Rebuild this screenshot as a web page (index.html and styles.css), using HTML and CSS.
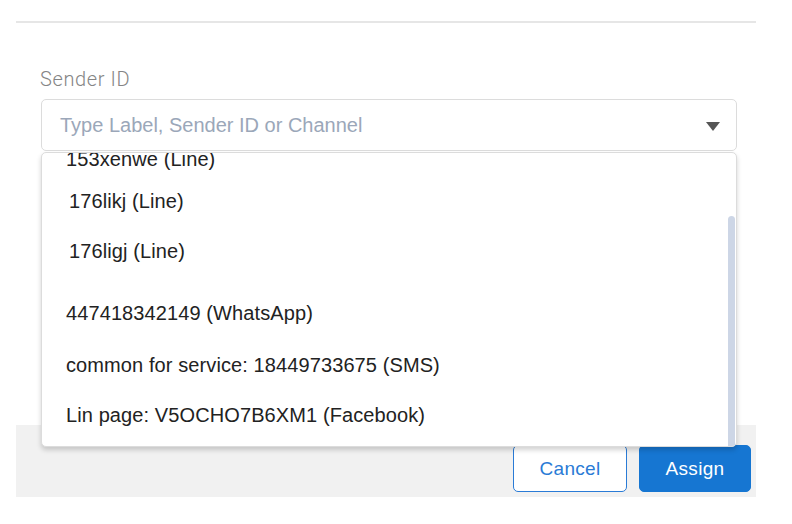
FILE: index.html
```html
<!DOCTYPE html>
<html>
<head>
<meta charset="utf-8">
<link rel="stylesheet" href="styles.css">
</head>
<body>
<div class="modal">
  <div class="topline"></div>
  <div class="content">
    <label class="label">Sender ID</label>
    <div class="field">
      <div class="input">
        <span class="placeholder">Type Label, Sender ID or Channel</span>
        <span class="caret"></span>
      </div>
      <div class="menu">
        <div class="menu-list">
          <div class="opt opt-line opt-first">153xenwe (Line)</div>
          <div class="opt opt-line opt-second">176likj (Line)</div>
          <div class="opt opt-line">176ligj (Line)</div>
          <div class="opt opt-group">447418342149 (WhatsApp)</div>
          <div class="opt opt-next">common for service: 18449733675 (SMS)</div>
          <div class="opt">Lin page: V5OCHO7B6XM1 (Facebook)</div>
        </div>
        <div class="scrollbar"></div>
      </div>
    </div>
  </div>
  <div class="footer">
    <button class="btn btn-cancel">Cancel</button>
    <button class="btn btn-assign">Assign</button>
  </div>
</div>
</body>
</html>
```
FILE: styles.css
```css
* { box-sizing: border-box; }
html, body { margin: 0; padding: 0; background: #fff; }
body {
  font-family: "Liberation Sans", Arial, sans-serif;
  color: #222;
}
.modal {
  margin-left: 16px;
  width: 740px;
}
.topline {
  margin-top: 21px;
  height: 2px;
  background: #e6e6e6;
}
.content {
  padding: 44px 19px 0 24px;
  height: 402px;
}
.label {
  display: block;
  font-family: Roboto, "Liberation Sans", sans-serif;
  font-weight: 300;
  font-size: 20px;
  letter-spacing: 0.6px;
  line-height: 24px;
  color: #858585;
}
.field {
  position: relative;
  margin-top: 8px;
  margin-left: 1px;
}
.input {
  height: 52px;
  border: 1px solid #dcdcdc;
  border-radius: 5px;
  display: flex;
  align-items: center;
  justify-content: space-between;
  padding: 0 16px 0 18px;
}
.placeholder {
  font-size: 20px;
  color: #9ba7b9;
}
.caret {
  width: 0;
  height: 0;
  border-left: 7px solid transparent;
  border-right: 7px solid transparent;
  border-top: 9px solid #555;
  margin-top: 2px;
}
.menu {
  position: absolute;
  left: 0;
  right: 0;
  top: 53px;
  height: 295px;
  background: #fff;
  border: 1px solid #dcdcdc;
  border-radius: 5px;
  box-shadow: 0 3px 5px rgba(0, 0, 0, 0.18);
  overflow: hidden;
  z-index: 5;
}
.menu-list {
  margin-top: -19px;
  display: flex;
  flex-direction: column;
}
.opt {
  height: 50px;
  line-height: 50px;
  padding-left: 24px;
  font-size: 20px;
  letter-spacing: 0.1px;
  color: #222;
  white-space: nowrap;
}
.opt-line { padding-left: 27px; }
.opt-first { padding-left: 24px; }
.opt-second { margin-top: -8px; }
.opt-group { margin-top: 12px; }
.opt-next { margin-top: 2px; }
.scrollbar {
  position: absolute;
  right: 1px;
  top: 63px;
  bottom: 0;
  width: 7px;
  background: #cdd6e6;
  border-radius: 4px 4px 0 0;
}
.footer {
  height: 72px;
  background: #f1f1f1;
  display: flex;
  justify-content: flex-end;
  align-items: flex-end;
  gap: 12px;
  padding: 0 5px 5px 0;
}
.btn {
  height: 47px;
  border-radius: 5px;
  font-family: "Liberation Sans", Arial, sans-serif;
  font-size: 19px;
  letter-spacing: 0.3px;
  cursor: pointer;
}
.btn-cancel {
  width: 114px;
  background: #fff;
  border: 1px solid #2a7bd6;
  color: #2a7bd6;
}
.btn-assign {
  width: 112px;
  background: #1676d2;
  border: 1px solid #1676d2;
  color: #fff;
}
```
